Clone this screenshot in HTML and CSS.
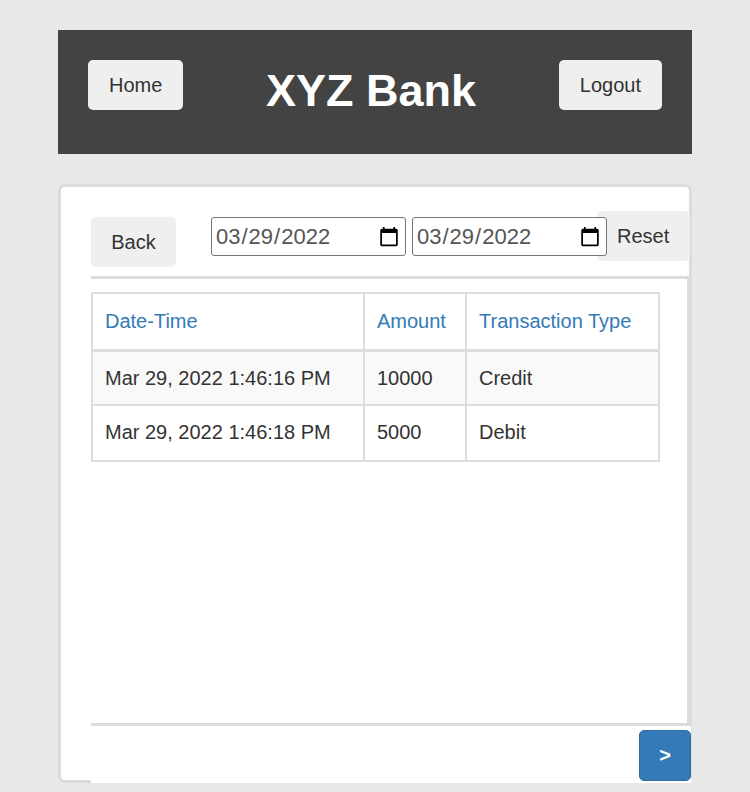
FILE: index.html
```html
<!DOCTYPE html>
<html lang="en">
<head>
<meta charset="utf-8">
<title>XYZ Bank</title>
<link rel="stylesheet" href="styles.css">
</head>
<body>
<div class="page">
  <header class="topbar">
    <button class="btn">Home</button>
    <h1 class="title">XYZ Bank</h1>
    <button class="btn">Logout</button>
  </header>

  <main class="card">
    <div class="toolbar">
      <button class="btn btn-back">Back</button>
      <input class="date date-first" type="date" value="2022-03-29">
      <input class="date" type="date" value="2022-03-29">
      <button class="btn btn-reset">Reset</button>
    </div>

    <div class="scroll">
      <table class="tx">
        <thead>
          <tr>
            <th class="c1">Date-Time</th>
            <th class="c2">Amount</th>
            <th class="c3">Transaction Type</th>
          </tr>
        </thead>
        <tbody>
          <tr class="odd">
            <td>Mar 29, 2022 1:46:16 PM</td>
            <td>10000</td>
            <td>Credit</td>
          </tr>
          <tr>
            <td>Mar 29, 2022 1:46:18 PM</td>
            <td>5000</td>
            <td>Debit</td>
          </tr>
        </tbody>
      </table>
    </div>

    <div class="pager">
      <button class="btn-next">&gt;</button>
    </div>
  </main>
</div>
</body>
</html>
```

FILE: styles.css
```css
html, body {
  margin: 0;
  padding: 0;
  background: #e8e8e8;
}

body {
  font-family: "Liberation Sans", Arial, sans-serif;
  color: #333;
}

.page {
  width: 634px;
  margin: 0 auto;
  padding-top: 30px;
}

.topbar {
  height: 124px;
  box-sizing: border-box;
  background: #434343;
  padding: 30px;
  display: flex;
  justify-content: space-between;
  align-items: flex-start;
}

.btn {
  height: 50px;
  padding: 0 20px;
  border: 1px solid transparent;
  border-radius: 5px;
  background: #efefef;
  color: #333;
  font-family: "Liberation Sans", Arial, sans-serif;
  font-size: 20px;
  line-height: 1;
  cursor: pointer;
}

.title {
  margin: 5px 0 0;
  color: #fff;
  font-size: 45px;
  font-weight: bold;
  line-height: 52px;
}

.card {
  margin-top: 30px;
  height: 599px;
  box-sizing: border-box;
  background: #fff;
  border: 3px solid #dcdcdc;
  border-radius: 7px;
  padding: 30px 0 0 30px;
}

.toolbar {
  width: 599px;
  display: flex;
  align-items: flex-start;
  height: 59px;
}

.toolbar .btn {
  flex: none;
}

.btn-back {
  width: 85px;
  padding: 0;
}

.date {
  position: relative;
  z-index: 1;
  width: 195px;
  height: 39px;
  box-sizing: border-box;
  margin: 0;
  padding: 0 3px;
  border: 1px solid #767676;
  border-radius: 3px;
  background: #fff;
  color: #555;
  font-family: "Liberation Sans", Arial, sans-serif;
  font-size: 22px;
  flex: none;
}

.date-first {
  margin-left: 35px;
  margin-right: 6px;
}

.btn-reset {
  margin-left: -10px;
  margin-top: -6px;
  width: 93px;
  padding: 0 0 0 1px;
  text-align: left;
  padding-left: 19px;
}

.scroll {
  width: 599px;
  height: 450px;
  box-sizing: border-box;
  border-top: 3px solid #dcdcdc;
  border-right: 3px solid #dcdcdc;
  border-bottom: 3px solid #dcdcdc;
  padding-top: 13px;
}

.tx {
  border-collapse: collapse;
  font-size: 20px;
  line-height: 28.6px;
  color: #333;
}

.tx th,
.tx td {
  border: 2px solid #dddddd;
  padding: 12px 12px 12px 12px;
  text-align: left;
  white-space: nowrap;
}

.tx th {
  font-weight: normal;
  color: #337ab7;
  border-bottom-width: 3px;
  padding-top: 13px;
  padding-bottom: 13px;
}

.tx tbody tr:first-child td {
  border-bottom-width: 1px;
}

.tx tbody tr:last-child td {
  padding-bottom: 13px;
}

.tx .c1 { width: 246px; }
.tx .c2 { width: 76px; }
.tx .c3 { width: 167px; }

.tx tr.odd td {
  background: #f9f9f9;
}

.pager {
  width: 600px;
  height: 57px;
  box-sizing: border-box;
  background: #fff;
  display: flex;
  justify-content: flex-end;
  padding-top: 4px;
}

.btn-next {
  width: 52px;
  height: 51px;
  border: 1px solid #2e6da4;
  border-radius: 5px;
  background: #337ab7;
  color: #fff;
  font-family: "Liberation Sans", Arial, sans-serif;
  font-size: 20px;
  font-weight: bold;
  padding: 0;
  cursor: pointer;
}
```
